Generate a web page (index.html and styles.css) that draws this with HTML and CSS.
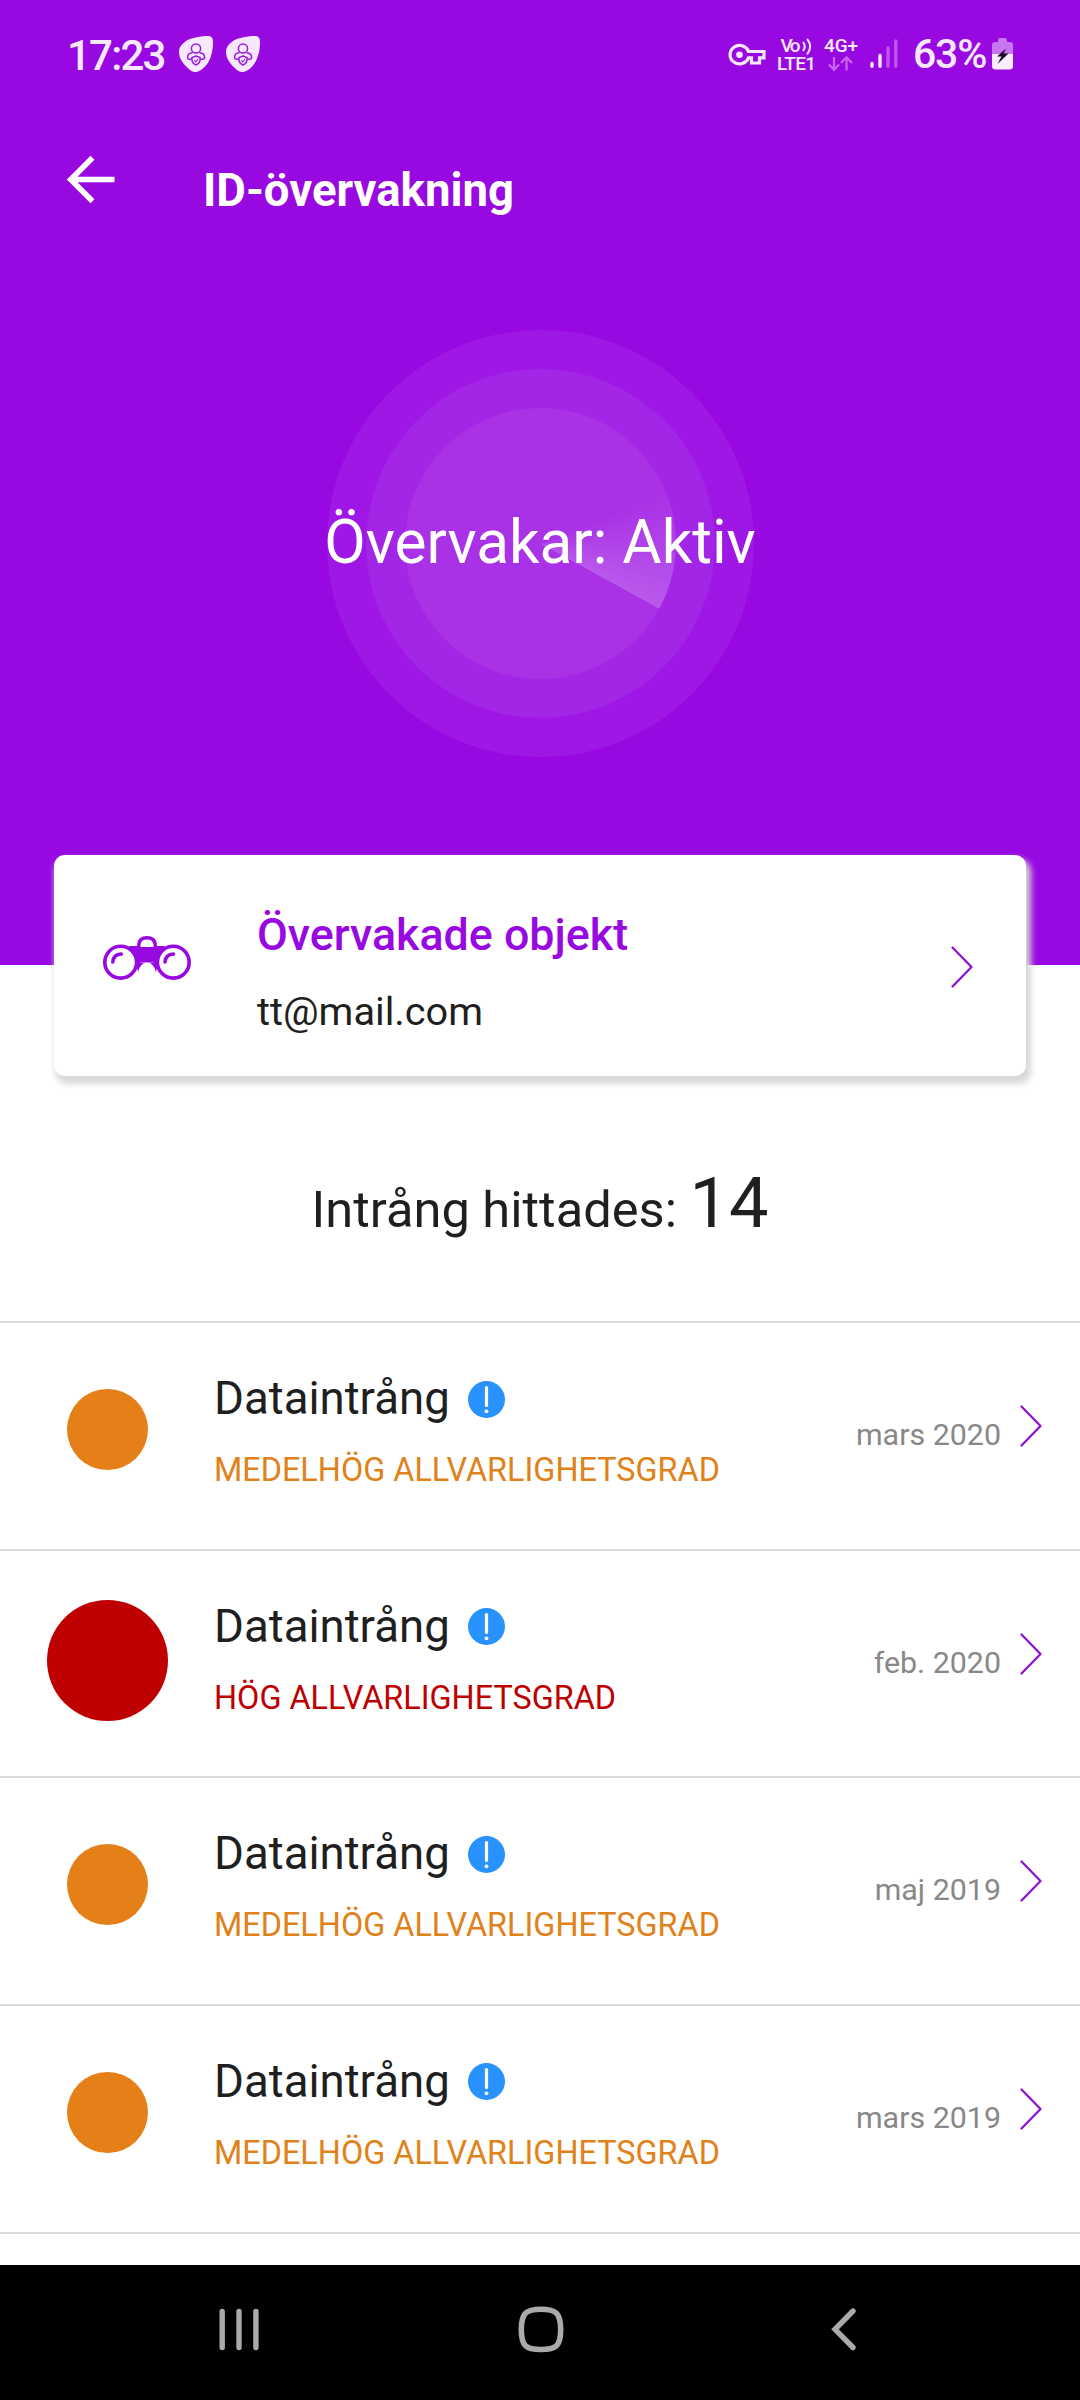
FILE: index.html
```html
<!DOCTYPE html>
<html lang="sv">
<head>
<meta charset="utf-8">
<title>ID-övervakning</title>
<link rel="stylesheet" href="styles.css">
</head>
<body>
<svg class="defs" width="0" height="0" aria-hidden="true">
  <symbol id="shield" viewBox="0 0 34 36">
    <path d="M7 5C12 1.500 23 0 29 0C32.500 0 34 2 34 6C34 17 31 28 22 34C18 37 14 36.500 11 34C5 29 0 23 0 16C0 11 3 8 7 5Z" fill="#f7e8fd"/>
    <g fill="none" stroke="#9a1be0" stroke-width="1.500">
      <circle cx="17" cy="12.500" r="4.600"/>
      <path d="M13 23.200H10.500Q8.600 23.200 8.600 21.200C8.600 18.500 10 17 13.500 16.700M21 23.200H23.500Q25.600 23.200 25.600 21.200C25.600 18.500 24 17 20.500 16.700"/>
      <path d="M17 20L21 21.500V24C21 26.500 19 28 17 29C15 28 13 26.500 13 24V21.500Z"/>
      <path d="M15.300 24.300L16.700 25.800L19 23" stroke-width="1.100"/>
    </g>
  </symbol>
  <symbol id="chevron" viewBox="0 0 22 42">
    <path d="M1.500 1.500L20.500 21L1.500 40.500" fill="none" stroke="#8d0fd0" stroke-width="2.200" stroke-linecap="round" stroke-linejoin="round"/>
  </symbol>
  <symbol id="info" viewBox="0 0 37 37">
    <circle cx="18.500" cy="18.500" r="18.500" fill="#2892ff"/>
    <path d="M18.500 6.500V24.500" stroke="#fff" stroke-width="3.200" stroke-linecap="round"/>
    <circle cx="18.500" cy="30.300" r="1.900" fill="#fff"/>
  </symbol>
</svg>

<div class="screen">
  <header class="hero">
    <div class="status">
      <span class="clock">17:23</span>
      <svg class="shield" width="34" height="36"><use href="#shield"/></svg>
      <svg class="shield" width="34" height="36"><use href="#shield"/></svg>
      <span class="spacer"></span>
      <svg class="key" width="38" height="24" viewBox="0 0 38 24">
        <path d="M20.500 8.500A9.500 9.200 0 1 0 20.500 14.800H23.500V20H31.500V14.800H36V8.500Z" fill="none" stroke="#f7e8fd" stroke-width="3.200"/>
        <circle cx="11.500" cy="11.700" r="3.300" fill="#f7e8fd"/>
      </svg>
      <svg class="volte" width="39" height="36" viewBox="0 0 39 36">
        <text x="3.500" y="15" class="net" textLength="20">Vo</text>
        <g fill="none" stroke="#f7e8fd" stroke-width="2"><path d="M26 5Q29.500 9.500 26 14"/><path d="M30 2Q36.500 9 30 17.500"/></g>
        <text x="0" y="33" class="net" textLength="39">LTE1</text>
      </svg>
      <svg class="data" width="34" height="36" viewBox="0 0 34 36">
        <text x="0" y="15" class="net" textLength="34">4G+</text>
        <path d="M10 20V32.500M5 27.500L10 32.800L15 27.500M22.500 33.500V20.500M17 26L22.500 20.300L28 26" fill="none" stroke="#c765f2" stroke-width="2.200"/>
      </svg>
      <svg class="signal" width="28" height="30" viewBox="0 0 28 30" stroke-width="3.400" stroke-linecap="round">
        <path d="M2 24.500V27.300M10 16.500V27.300" stroke="#f7e8fd"/>
        <path d="M18 9V27.300M25.800 2V27.300" stroke="#bd55ee"/>
      </svg>
      <span class="percent">63%</span>
      <svg class="battery" width="21" height="32" viewBox="0 0 21 32">
        <path d="M6 4V2Q6 0 8 0H13Q15 0 15 2V4H18Q21 4 21 7V16H0V7Q0 4 3 4Z" fill="#c876f0"/>
        <path d="M0 16H21V28Q21 31.500 17.500 31.500H3.500Q0 31.500 0 28Z" fill="#f9ecff"/>
        <path d="M14 10.500L5 18.500H9.500L5.500 26L16.500 15.500H11.500Z" fill="#1b0b24"/>
      </svg>
    </div>
    <div class="appbar">
      <svg class="back" width="48" height="48" viewBox="0 0 48 48">
        <path d="M47.500 23.500H5M25.500 1.800L3.800 23.500L25.500 45.200" fill="none" stroke="#fff" stroke-width="5.600"/>
      </svg>
      <h1 class="title">ID-övervakning</h1>
    </div>
    <div class="radar">
      <div class="ring ring-outer"></div>
      <div class="ring ring-middle"></div>
      <div class="ring ring-inner"></div>
      <p class="radar-text">Övervakar: Aktiv</p>
    </div>
  </header>

  <section class="card">
    <svg class="binoculars" width="88" height="45" viewBox="0 0 88 45">
      <path d="M26 10H62L53 28Q51.500 26 44 26Q36.500 26 35 28Z" fill="#9808e0"/>
      <path d="M33 28Q37 26.200 44 26.200Q51 26.200 55 28L53 36Q50.500 26.500 44 26.500Q37.500 26.500 35 36Z" fill="#9808e0"/>
      <g fill="#fff" stroke="#9808e0" stroke-width="3.600">
        <circle cx="17.700" cy="26.200" r="15.900"/>
        <circle cx="70.300" cy="26.200" r="15.900"/>
      </g>
      <path d="M35.800 11V8.500Q36.500 1.800 44 1.800Q51.500 1.800 52.200 8.500V11" fill="#fff" stroke="#9808e0" stroke-width="3.400"/>
      <path d="M9.800 26Q10.200 18.500 18.300 18M62 26Q62.400 18.500 70.500 18" fill="none" stroke="#9808e0" stroke-width="3.600" stroke-linecap="round"/>
    </svg>
    <div class="card-text">
      <h2 class="card-title">Övervakade objekt</h2>
      <p class="card-mail">tt@mail.com</p>
    </div>
    <svg class="card-chevron" width="22" height="42"><use href="#chevron"/></svg>
  </section>

  <p class="summary">Intrång hittades: <span class="count">14</span></p>

  <ul class="list">
    <li class="row">
      <span class="severity"><span class="dot"></span></span>
      <div class="info"><div class="name">Dataintrång<svg width="37" height="37"><use href="#info"/></svg></div><div class="level">MEDELHÖG ALLVARLIGHETSGRAD</div></div>
      <span class="date">mars 2020</span>
      <svg class="go" width="22" height="42"><use href="#chevron"/></svg>
    </li>
    <li class="row high">
      <span class="severity"><span class="dot"></span></span>
      <div class="info"><div class="name">Dataintrång<svg width="37" height="37"><use href="#info"/></svg></div><div class="level">HÖG ALLVARLIGHETSGRAD</div></div>
      <span class="date">feb. 2020</span>
      <svg class="go" width="22" height="42"><use href="#chevron"/></svg>
    </li>
    <li class="row">
      <span class="severity"><span class="dot"></span></span>
      <div class="info"><div class="name">Dataintrång<svg width="37" height="37"><use href="#info"/></svg></div><div class="level">MEDELHÖG ALLVARLIGHETSGRAD</div></div>
      <span class="date">maj 2019</span>
      <svg class="go" width="22" height="42"><use href="#chevron"/></svg>
    </li>
    <li class="row">
      <span class="severity"><span class="dot"></span></span>
      <div class="info"><div class="name">Dataintrång<svg width="37" height="37"><use href="#info"/></svg></div><div class="level">MEDELHÖG ALLVARLIGHETSGRAD</div></div>
      <span class="date">mars 2019</span>
      <svg class="go" width="22" height="42"><use href="#chevron"/></svg>
    </li>
    <li class="row"></li>
  </ul>

  <nav class="nav">
    <svg width="40" height="46" viewBox="0 0 40 46"><path d="M3.200 4.500V40.500M20 4.500V40.500M36.900 4.500V40.500" stroke="#aaa" stroke-width="5.400" stroke-linecap="round"/></svg>
    <svg class="home" width="46" height="46" viewBox="0 0 46 46"><path d="M23 2.300C38 2.300 42.700 6 42.700 22.500C42.700 39 38 42.500 23 42.500C8 42.500 3.300 39 3.300 22.500C3.300 6 8 2.300 23 2.300Z" fill="none" stroke="#aaa" stroke-width="5.600"/></svg>
    <svg width="27" height="46" viewBox="0 0 27 46"><path d="M23 4L5 22.300L23 40.500" fill="none" stroke="#aaa" stroke-width="5.400" stroke-linecap="round"/></svg>
  </nav>
</div>
</body>
</html>
```
FILE: styles.css
```css
* { box-sizing: border-box; margin: 0; padding: 0; }
body { width: 1080px; font-family: Roboto, sans-serif; color: #1f1f1f; background: #fff; }
svg { display: block; flex: none; overflow: visible; }
.defs { position: absolute; }
.screen { display: flex; flex-direction: column; height: 2400px; overflow: hidden; }

.hero { flex: none; height: 965px; background: #9808e0; color: #fff; }

.status { display: flex; align-items: flex-start; height: 111px; padding: 0 67px; color: #f7e8fd; }
.clock { width: 112px; padding-top: 27px; font-size: 42px; font-weight: 500; line-height: 57px; letter-spacing: -1.800px; }
.shield { margin: 36px 13px 0 0; }
.spacer { flex: 1; }
.key { margin: 43px 11px 0 0; }
.volte { margin: 37px 8px 0 0; }
.data { margin: 37px 12px 0 0; }
.signal { margin: 39px 15px 0 0; }
.percent { width: 79px; padding-top: 26px; font-size: 41px; font-weight: 500; line-height: 57px; letter-spacing: -1.200px; }
.battery { margin-top: 38px; }
.net { font-size: 19px; font-weight: 500; fill: #f7e8fd; }

.appbar { display: flex; height: 219px; padding: 45px 67px 0; }
.back { margin-right: 88px; }
.title { padding-top: 5px; font-size: 45.500px; font-weight: 700; line-height: 60px; }

.radar { display: grid; grid-template: 427px / 427px; width: 427px; margin: 0 auto; place-items: center; }
.radar > * { grid-area: 1 / 1; }
.ring { border-radius: 50%; }
.ring-outer { width: 427px; height: 427px; background: #9f17e5; }
.ring-middle { width: 349px; height: 349px; background: #a325e5; }
.ring-inner { width: 271px; height: 271px; background: conic-gradient(from 68deg, rgba(255,255,255,0), rgba(255,255,255,.19) 50.600deg, rgba(255,255,255,0) 50.900deg) #a932e6; }
.radar-text { margin-top: -2px; font-size: 60.300px; line-height: 80px; white-space: nowrap; }

.card { display: flex; flex: none; width: 972px; height: 221px; margin: -110px auto 0; padding: 0 53px 0 49px; border-radius: 11px; background: #fff; box-shadow: 3px 6px 6px 2px #d8d8d8; }
.binoculars { margin: 81px 66px 0 0; }
.card-text { flex: 1; padding-top: 50px; }
.card-title { color: #9808e0; font-size: 44.800px; font-weight: 500; line-height: 60px; }
.card-mail { margin-top: 23px; font-size: 39.700px; line-height: 48px; }
.card-chevron { margin-top: 91px; }

.summary { flex: none; height: 245px; padding-top: 86px; text-align: center; font-size: 50.600px; line-height: 82px; }
.count { font-size: 70.300px; }

.list { flex: 1; min-height: 0; overflow: hidden; list-style: none; }
.row { display: flex; height: 227.650px; border-top: 2px solid #dadada; }
.severity { display: flex; width: 214px; justify-content: center; }
.dot { width: 81px; height: 81px; margin-top: 66px; border-radius: 50%; background: #e57f17; }
.high .dot { width: 121px; height: 121px; margin-top: 49px; background: #be0000; }
.info { flex: 1; padding-top: 50px; }
.name { display: flex; align-items: center; gap: 18px; font-size: 45.600px; line-height: 52px; }
.level { margin-top: 25px; color: #e08119; font-size: 32.400px; line-height: 40px; white-space: nowrap; }
.high .level { color: #be0000; }
.date { padding-top: 92px; color: #888; font-size: 30.400px; line-height: 40px; }
.go { margin: 82px 38px 0 19px; }

.nav { display: flex; flex: none; height: 135px; padding: 42px 0 0 219px; background: #000; }
.home { margin: 0 266px 0 259px; }
```
